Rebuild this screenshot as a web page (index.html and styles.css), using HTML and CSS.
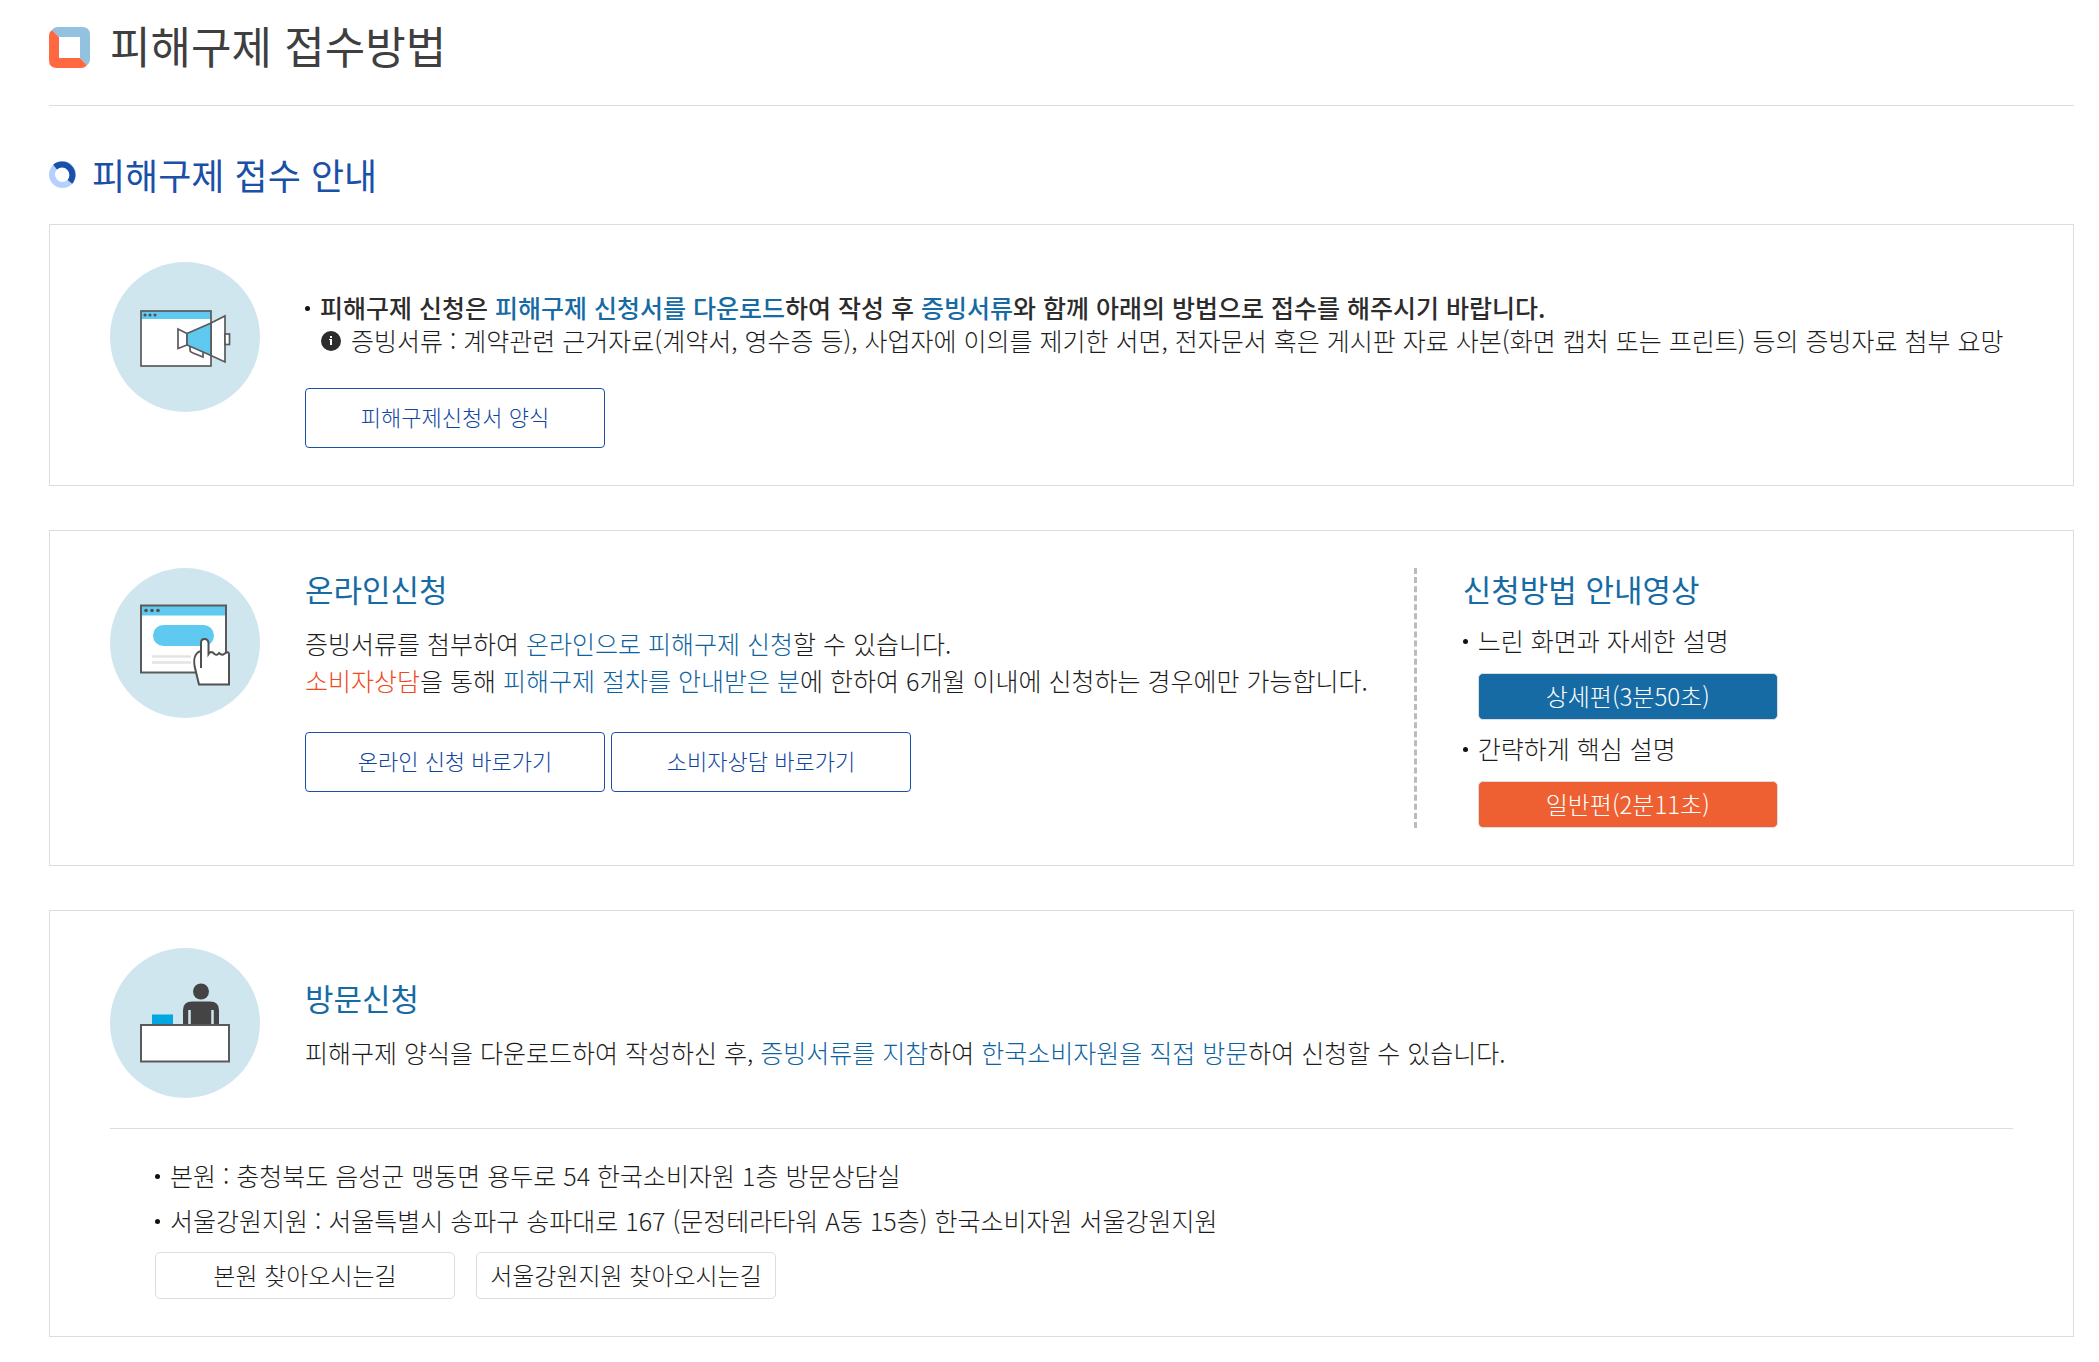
FILE: index.html
```html
<!DOCTYPE html>
<html lang="ko">
<head>
    <meta charset="UTF-8">
    <title>피해구제 접수방법</title>
    <link rel="stylesheet" href="styles.css">
</head>
<body>
    <main class="content">
        <header class="page-header">
            <svg class="title-icon" viewBox="0 0 41 41" aria-hidden="true">
                <path fill="#93c2e0" d="M3 3Q5 0 9 0H33Q41 0 41 8V32Q41 36 38 38L31 31V10H10Z"/>
                <path fill="#ff6840" d="M3 3L10 10V31H31L38 38Q36 41 32 41H8Q0 41 0 33V9Q0 5 3 3Z"/>
            </svg>
            <h1>피해구제 접수방법</h1>
        </header>

        <h2 class="section-title">
            <svg class="ring-icon" viewBox="0 0 27 27" aria-hidden="true">
                <circle cx="13.5" cy="13.5" r="10.5" fill="none" stroke="#b5d0ff" stroke-width="6"/>
                <path d="M6.1 6.1A10.5 10.5 0 0 1 20.9 20.9" fill="none" stroke="#1a50a8" stroke-width="6"/>
            </svg>
            피해구제 접수 안내
        </h2>

        <section class="box">
            <div class="box-row">
                <svg class="circle-icon" viewBox="0 0 150 150" aria-hidden="true">
                    <circle cx="75" cy="75" r="75" fill="#d0e6ef"/>
                    <rect x="31" y="49" width="70" height="55" fill="#fff"/>
                    <rect x="31" y="49" width="70" height="8" fill="#5fc9ef"/>
                    <g fill="#505050"><circle cx="35" cy="53" r="1.5"/><circle cx="40" cy="53" r="1.5"/><circle cx="45" cy="53" r="1.5"/></g>
                    <g stroke="#5a5a5a" stroke-width="1.7">
                        <rect x="31" y="49" width="70" height="55" fill="none"/>
                        <path d="M80 84V88Q80 90 83 91L93 95V91L95 89" fill="#fff"/>
                        <path d="M68 67L77 71.500V83L68 86.500Z" fill="#fff"/>
                        <path d="M101 61L115 54V100L101 93.500Z" fill="#fff"/>
                        <path d="M77 71.500L101 61V93.500L77 83Z" fill="#5fc9ef"/>
                        <rect x="115" y="72" width="4.500" height="10.500" fill="#fff"/>
                    </g>
                </svg>
                <div class="box-text">
                    <p class="lead dot">피해구제 신청은 <em>피해구제 신청서를 다운로드</em>하여 작성 후 <em>증빙서류</em>와 함께 아래의 방법으로 접수를 해주시기 바랍니다.</p>
                    <p class="note">
                        <svg class="info-icon" viewBox="0 0 20 20" aria-hidden="true">
                            <circle cx="10" cy="10" r="10" fill="#2c2c2c"/>
                            <path d="M9 5h2v2H9zM8 8h3v6H9V9H8z" fill="#fff"/>
                        </svg>
                        증빙서류 : 계약관련 근거자료(계약서, 영수증 등), 사업자에 이의를 제기한 서면, 전자문서 혹은 게시판 자료 사본(화면 캡처 또는 프린트) 등의 증빙자료 첨부 요망
                    </p>
                    <div class="buttons">
                        <button type="button" class="btn">피해구제신청서 양식</button>
                    </div>
                </div>
            </div>
        </section>

        <section class="box">
            <div class="box-row">
                <svg class="circle-icon" viewBox="0 0 150 150" aria-hidden="true">
                    <circle cx="75" cy="75" r="75" fill="#d0e6ef"/>
                    <rect x="31" y="37.500" width="85" height="67" fill="#fff"/>
                    <rect x="31" y="37.500" width="85" height="10" fill="#5fc9ef"/>
                    <g fill="#505050"><circle cx="36" cy="42.500" r="1.800"/><circle cx="42" cy="42.500" r="1.800"/><circle cx="48" cy="42.500" r="1.800"/></g>
                    <rect x="31" y="37.500" width="85" height="67" fill="none" stroke="#5a5a5a" stroke-width="2"/>
                    <rect x="43" y="57" width="61" height="21" rx="10.500" fill="#5fc9ef"/>
                    <path d="M42 88.500H81M42 94.500H81" stroke="#e4e4e4" stroke-width="2.500"/>
                    <path d="M89 116.500L85.500 102C83 93 84 85 91 83V75Q91 71 94.500 71T98.500 75V86Q101 82 104.500 86Q107 88 109 85Q112 88 114 86Q119 82 119 87V116.500Z" fill="#fff" stroke="#505050" stroke-width="2"/>
                    <path d="M91 83V100" stroke="#505050" stroke-width="2"/>
                </svg>
                <div class="box-text">
                    <h3>온라인신청</h3>
                    <p>증빙서류를 첨부하여 <em>온라인으로 피해구제 신청</em>할 수 있습니다.</p>
                    <p><em class="orange">소비자상담</em>을 통해 <em>피해구제 절차를 안내받은 분</em>에 한하여 6개월 이내에 신청하는 경우에만 가능합니다.</p>
                    <div class="buttons">
                        <button type="button" class="btn">온라인 신청 바로가기</button>
                        <button type="button" class="btn">소비자상담 바로가기</button>
                    </div>
                </div>
                <div class="video-guide">
                    <h3>신청방법 안내영상</h3>
                    <ul>
                        <li>
                            <p class="dot">느린 화면과 자세한 설명</p>
                            <button type="button" class="btn-video blue">상세편(3분50초)</button>
                        </li>
                        <li>
                            <p class="dot">간략하게 핵심 설명</p>
                            <button type="button" class="btn-video red">일반편(2분11초)</button>
                        </li>
                    </ul>
                </div>
            </div>
        </section>

        <section class="box">
            <div class="box-row visit">
                <svg class="circle-icon" viewBox="0 0 150 150" aria-hidden="true">
                    <circle cx="75" cy="75" r="75" fill="#d0e6ef"/>
                    <circle cx="91" cy="43.500" r="8" fill="#444"/>
                    <path d="M73 77V62Q73 53.500 82 53.500H100Q109 53.500 109 62V77Z" fill="#444"/>
                    <path d="M79.500 62V77M102.500 62V77" stroke="#d0e6ef" stroke-width="2.500"/>
                    <rect x="42" y="66.500" width="21" height="10" fill="#00a7e1"/>
                    <rect x="31" y="77" width="88" height="36.500" fill="#fff" stroke="#5a5a5a" stroke-width="2"/>
                </svg>
                <div class="box-text">
                    <h3>방문신청</h3>
                    <p>피해구제 양식을 다운로드하여 작성하신 후, <em>증빙서류를 지참</em>하여 <em>한국소비자원을 직접 방문</em>하여 신청할 수 있습니다.</p>
                </div>
            </div>
            <div class="places">
                <ul>
                    <li class="dot">본원 : 충청북도 음성군 맹동면 용두로 54 한국소비자원 1층 방문상담실</li>
                    <li class="dot">서울강원지원 : 서울특별시 송파구 송파대로 167 (문정테라타워 A동 15층) 한국소비자원 서울강원지원</li>
                </ul>
                <div class="place-buttons">
                    <button type="button" class="btn-place">본원 찾아오시는길</button>
                    <button type="button" class="btn-place">서울강원지원 찾아오시는길</button>
                </div>
            </div>
        </section>
    </main>
</body>
</html>
```

FILE: styles.css
```css
* {
    box-sizing: border-box;
}
body {
    margin: 0;
    background-color: #fff;
    color: #1c1c1c;
    font-family: "Noto Sans CJK KR", sans-serif;
    font-size: 25px;
    font-weight: 300;
    line-height: 37px;
}
h1, h2, h3, p, ul {
    margin: 0;
    padding: 0;
}
h1, h2, h3 {
    font-weight: 400;
}
ul {
    list-style: none;
}
em {
    font-style: normal;
    color: #0d639f;
}
.orange {
    color: #f04a1c;
}
button {
    font-family: inherit;
    font-weight: 300;
    padding: 0;
    cursor: pointer;
}
.content {
    padding: 0 25px 24px 49px;
}
.page-header {
    display: flex;
    align-items: flex-start;
    gap: 20px;
    padding: 15px 0 30px;
    border-bottom: 1px solid #ddd;
}
.title-icon {
    width: 41px;
    height: 41px;
    margin-top: 12px;
}
h1 {
    font-size: 44px;
    line-height: 60px;
    color: #3f3f3f;
}
.section-title {
    display: flex;
    align-items: center;
    gap: 16px;
    margin: 44px 0 25px;
    font-size: 36px;
    line-height: 49px;
    color: #1a50a8;
}
.ring-icon {
    width: 27px;
    height: 27px;
}
.box {
    padding: 37px 60px;
    border: 1px solid #ddd;
    margin-bottom: 44px;
}
.box:last-child {
    margin-bottom: 0;
}
.box-row {
    display: flex;
    align-items: flex-start;
}
.circle-icon {
    flex: none;
    width: 150px;
    height: 150px;
    margin-right: 45px;
}
h3 {
    font-size: 31px;
    line-height: 42px;
    margin-bottom: 15px;
    color: #166ba5;
}
.dot {
    position: relative;
    padding-left: 15px;
}
.dot::before {
    content: "";
    position: absolute;
    left: 0;
    top: 17px;
    width: 5px;
    height: 5px;
    border-radius: 50%;
    background-color: #111;
}
.lead {
    margin-top: 27px;
    font-weight: 500;
    color: #2c2c2c;
}
.lead em {
    color: #166ba5;
}
.note {
    display: flex;
    align-items: center;
    gap: 10px;
    padding-left: 16px;
    line-height: 29px;
}
.info-icon {
    flex: none;
    width: 20px;
    height: 20px;
}
.buttons {
    display: flex;
    gap: 6px;
    margin-top: 33px;
}
.btn {
    width: 300px;
    height: 60px;
    padding-bottom: 4px;
    border: 1px solid #1a50a8;
    border-radius: 4px;
    background-color: #fff;
    color: #1045a0;
    font-size: 22px;
}
.video-guide {
    margin-left: 46px;
    padding-left: 46px;
    border-left: 3px dashed #bbb;
}
.video-guide h3 {
    margin-bottom: 12px;
}
.video-guide li + li {
    margin-top: 10px;
}
.btn-video {
    display: block;
    width: 300px;
    height: 47px;
    margin: 14px 0 0 15px;
    padding-bottom: 2px;
    border: 1px solid #ddd;
    border-radius: 5px;
    color: #fff;
    font-size: 24px;
}
.blue {
    background-color: #166ba5;
}
.red {
    background-color: #ee5f32;
}
.visit {
    padding-bottom: 30px;
    border-bottom: 1px solid #ddd;
}
.visit .box-text {
    padding-top: 29px;
}
.places {
    padding: 28px 45px 0;
}
.places li {
    margin-bottom: 8px;
}
.place-buttons {
    display: flex;
    gap: 21px;
    padding-top: 5px;
}
.btn-place {
    width: 300px;
    height: 47px;
    padding-bottom: 3px;
    border: 1px solid #ddd;
    border-radius: 5px;
    background-color: #fff;
    color: #1c1c1c;
    font-size: 24px;
}
```
